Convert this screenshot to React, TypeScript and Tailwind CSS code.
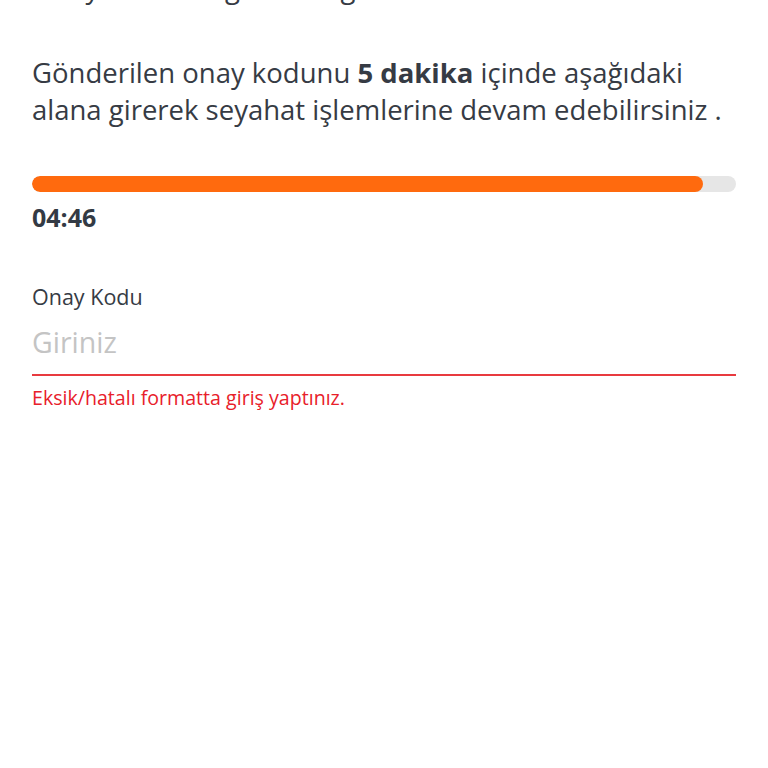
import React from "react";

export default function App() {
  return (
    <div
      className="w-[768px] h-[768px] bg-white overflow-hidden px-8"
      style={{ fontFamily: '"Open Sans", "Noto Sans", sans-serif' }}
    >
      <p className="mt-[-31px] text-[27.5px] leading-[37px] text-[#363b44] whitespace-nowrap">
        Onay kodunuz gönderdiğimiz SMS ile
      </p>
      <p className="mt-[48px] text-[27.5px] leading-[37px] text-[#363b44]">
        Gönderilen onay kodunu <span className="font-bold">5 dakika</span> içinde aşağıdaki alana girerek seyahat işlemlerine devam edebilirsiniz .
      </p>
      <div className="mt-[48px] h-[16px] w-full rounded-full bg-[#e6e6e6] overflow-hidden">
        <div className="h-full rounded-full bg-[#ff6a0e]" style={{ width: "95.3%" }} />
      </div>
      <div className="mt-[10px] text-[25px] leading-[30px] font-bold text-[#333a44]">04:46</div>
      <div className="mt-[51px] text-[21.5px] leading-[28px] text-[#363b44]">Onay Kodu</div>
      <input
        className="mt-[13px] block w-full bg-transparent p-0 pb-[14px] text-[28.5px] leading-[36px] h-[52px] outline-none border-0 border-b-2 border-[#e83a3f] placeholder:text-[#c4c4c4]"
        placeholder="Giriniz"
        style={{ fontFamily: '"Open Sans", "Noto Sans", sans-serif' }}
      />
      <div className="mt-[9px] text-[19.6px] leading-[26px] text-[#e8202a]">Eksik/hatalı formatta giriş yaptınız.</div>
    </div>
  );
}
